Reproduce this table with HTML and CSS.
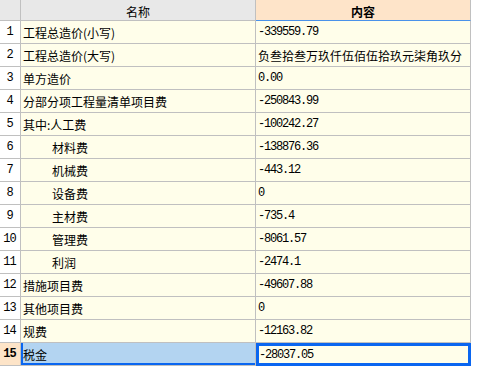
FILE: index.html
```html
<!DOCTYPE html>
<html>
<head>
<meta charset="utf-8">
<link rel="stylesheet" href="styles.css">
</head>
<body>
<div class="grid">
  <div class="hd hd-idx"></div>
  <div class="hd hd-name">名称</div>
  <div class="hd hd-val">内容</div>

  <div class="idx">1</div><div class="name">工程总造价(小写)</div><div class="val">-339559.79</div>
  <div class="idx">2</div><div class="name">工程总造价(大写)</div><div class="val cjk">负叁拾叁万玖仟伍佰伍拾玖元柒角玖分</div>
  <div class="idx">3</div><div class="name">单方造价</div><div class="val">0.00</div>
  <div class="idx">4</div><div class="name">分部分项工程量清单项目费</div><div class="val">-250843.99</div>
  <div class="idx">5</div><div class="name">其中:人工费</div><div class="val">-100242.27</div>
  <div class="idx">6</div><div class="name sub">材料费</div><div class="val">-138876.36</div>
  <div class="idx">7</div><div class="name sub">机械费</div><div class="val">-443.12</div>
  <div class="idx">8</div><div class="name sub">设备费</div><div class="val">0</div>
  <div class="idx">9</div><div class="name sub">主材费</div><div class="val">-735.4</div>
  <div class="idx">10</div><div class="name sub">管理费</div><div class="val">-8061.57</div>
  <div class="idx">11</div><div class="name sub">利润</div><div class="val">-2474.1</div>
  <div class="idx">12</div><div class="name">措施项目费</div><div class="val">-49607.88</div>
  <div class="idx">13</div><div class="name">其他项目费</div><div class="val">0</div>
  <div class="idx">14</div><div class="name">规费</div><div class="val">-12163.82</div>
  <div class="idx sel-idx">15</div><div class="name sel-name">税金</div><div class="val sel-val">-28037.05</div>
</div>
</body>
</html>
```

FILE: styles.css
```css
html, body {
  margin: 0;
  padding: 0;
  background: #ffffff;
}

.grid {
  display: grid;
  grid-template-columns: 21px 235px 215px;
  grid-template-rows: 21px repeat(15, 23px);
  width: 471px;
  font-family: "Noto Sans CJK SC", "Noto Sans", sans-serif;
  font-size: 12px;
  color: #000;
}

.grid > div {
  box-sizing: border-box;
  border-right: 1px solid #c0c0c0;
  border-bottom: 1px solid #c0c0c0;
  display: flex;
  align-items: center;
  white-space: nowrap;
  overflow: hidden;
}

.hd {
  background: #e8e8e8;
  justify-content: center;
  padding-top: 2px;
}

.hd-val {
  background: #fee4c9;
  font-weight: bold;
  border-bottom: 1px solid #4a92ea !important;
}

.idx {
  background: #ffffff;
  justify-content: center;
  font-family: "Liberation Mono", "DejaVu Sans Mono", monospace;
  letter-spacing: -1px;
  padding-right: 1px;
}

.name {
  background: #fffeea;
  padding-left: 2px;
}

.name.sub {
  padding-left: 31px;
}

.val {
  background: #fffeea;
  padding-left: 2px;
  font-family: "Liberation Mono", "DejaVu Sans Mono", monospace;
  letter-spacing: -1.2px;
}

.val.cjk {
  font-family: "Noto Sans CJK SC", sans-serif;
  letter-spacing: 0;
}

.sel-idx {
  background: #fde4c8;
  font-weight: bold;
}

.sel-name {
  background: #b3d4f1;
  box-shadow: inset 2px -2px 0 #0a66f0;
}

.grid > .sel-val {
  border: 3px solid #0a66f0;
  padding-left: 0;
}
```
